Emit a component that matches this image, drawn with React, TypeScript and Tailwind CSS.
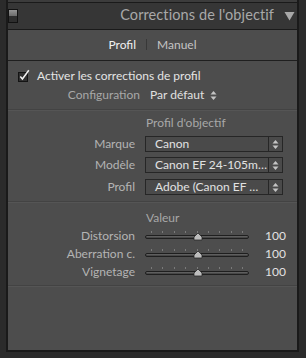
import React from 'react';

const ticks = [0, 1, 2, 3, 4, 5, 6, 7, 8];

const Stepper: React.FC = () => (
  <svg width="7" height="11" viewBox="0 0 7 11" className="block">
    <polygon points="3.5,1 6.5,4.5 0.5,4.5" fill="#c4c4c4" />
    <polygon points="0.5,6.5 6.5,6.5 3.5,10" fill="#c4c4c4" />
  </svg>
);

const Dropdown: React.FC<{ label: string; value: string }> = ({ label, value }) => (
  <div className="flex items-center h-[16px]">
    <div className="w-[128px] text-right text-[#b4b4b4] pr-px">{label}</div>
    <div className="ml-[9px] w-[138px] h-[16px] flex border border-[#262626] bg-[#4a4a4a]">
      <div className="flex-1 pl-[9px] leading-[14px] text-[#e2e2e2] whitespace-nowrap overflow-hidden">
        {value}
      </div>
      <div className="w-[14px] border-l border-[#262626] flex items-center justify-center">
        <Stepper />
      </div>
    </div>
  </div>
);

const SliderRow: React.FC<{ label: string; value: string }> = ({ label, value }) => (
  <div className="flex items-center h-[18px]">
    <div className="w-[128px] text-right text-[#b4b4b4] pr-px">{label}</div>
    <div className="ml-[9px] w-[104px] h-[18px] relative">
      {ticks.map((i) => (
        <div
          key={i}
          className="absolute top-[4px] w-px h-[2px] bg-[#7a7a7a]"
          style={{ left: 6 + i * 11.4 }}
        />
      ))}
      <div className="absolute left-0 right-0 top-[8px] h-[4px] rounded-full border border-[#1f1f1f] bg-gradient-to-b from-[#6a6a6a] to-[#3c3c3c]" />
      <svg width="10" height="9" viewBox="0 0 10 9" className="absolute left-[48px] top-[5px]">
        <polygon points="1,8 1,5 5,1 9,5 9,8" fill="#bdbdbd" stroke="#2a2a2a" strokeWidth="0.8" />
      </svg>
    </div>
    <div className="w-[37px] text-right text-[#e2e2e2]">{value}</div>
  </div>
);

const Separator: React.FC<{ className?: string }> = ({ className }) => (
  <div className={`h-[2px] border-t border-[#434343] bg-[#555555] ${className ?? ''}`} />
);

export default function App() {
  return (
    <div
      className="w-[306px] h-[358px] bg-[#2b2b2b] pl-[6px] pr-[7px] pb-[6px] flex flex-col text-[12px]"
      style={{ fontFamily: 'Lato, "Open Sans", sans-serif' }}
    >
      {/* previous panel remnant */}
      <div className="h-[3px] bg-[#3c3c3c] border-x-2 border-b border-[#1a1a1a]" />

      {/* header */}
      <div className="h-[26px] bg-[#363636] border-x-2 border-[#1a1a1a] flex items-start">
        <div className="mt-[6px] w-[10px] h-[14px] border border-[#121212] flex flex-col">
          <div className="flex-1 bg-gradient-to-b from-[#959595] to-[#6c6c6c]" />
          <div className="flex-1 bg-[#2e2e2e]" />
        </div>
        <div className="flex-1 flex items-center justify-end h-[24px] pr-[2px]">
          <span className="text-[14.5px] text-[#a9a9a9] tracking-[0.1px]">Corrections de l'objectif</span>
          <svg width="11" height="10" viewBox="0 0 11 10" className="ml-[10px] mt-px">
            <polygon points="0.5,1 10.5,1 5.5,9.5" fill="#a8a8a8" />
          </svg>
        </div>
      </div>

      {/* panel */}
      <div className="flex-1 flex flex-col bg-[#4d4d4d] border-x-2 border-t border-b-2 border-[#1a1a1a]">
        {/* tabs */}
        <div className="h-[31px] border-b border-[#1f1f1f] flex items-center justify-center pb-px">
          <span className="text-[#f0f0f0]">Profil</span>
          <span className="mx-[10px] w-px h-[11px] bg-[#383838]" />
          <span className="text-[#c4c4c4]">Manuel</span>
        </div>

        {/* checkbox */}
        <div className="mt-[5px] h-[19px] flex items-center pl-[10px]">
          <svg width="12" height="13" viewBox="0 0 12 13" className="mb-px">
            <rect x="0.5" y="3.5" width="9" height="9" fill="#303030" stroke="#141414" />
            <path d="M2.3 7.6 L4.4 10 L10.8 1.2" fill="none" stroke="#f2f2f2" strokeWidth="1.5" />
          </svg>
          <span className="ml-[7px] text-[#e4e4e4]">Activer les corrections de profil</span>
        </div>

        {/* configuration */}
        <div className="h-[20px] flex items-center">
          <div className="w-[132px] text-right text-[#a8a8a8]">Configuration</div>
          <div className="ml-[10px] text-[#e0e0e0]">Par défaut</div>
          <div className="ml-[6px] mt-px">
            <Stepper />
          </div>
        </div>

        <Separator className="mt-[4px]" />

        <div className="mt-[3px] h-[18px] flex items-center pl-[138px] text-[#a8a8a8]">Profil d'objectif</div>

        <div className="mt-[4px] flex flex-col">
          <Dropdown label="Marque" value="Canon" />
          <div className="mt-[5px]">
            <Dropdown label="Modèle" value="Canon EF 24-105m…" />
          </div>
          <div className="mt-[6px]">
            <Dropdown label="Profil" value="Adobe (Canon EF …" />
          </div>
        </div>

        <Separator className="mt-[6px]" />

        <div className="mt-[6px] h-[18px] flex items-center pl-[138px] text-[#a8a8a8]">Valeur</div>

        <SliderRow label="Distorsion" value="100" />
        <SliderRow label="Aberration c." value="100" />
        <SliderRow label="Vignetage" value="100" />

        <Separator className="mt-[4px]" />
      </div>
    </div>
  );
}
